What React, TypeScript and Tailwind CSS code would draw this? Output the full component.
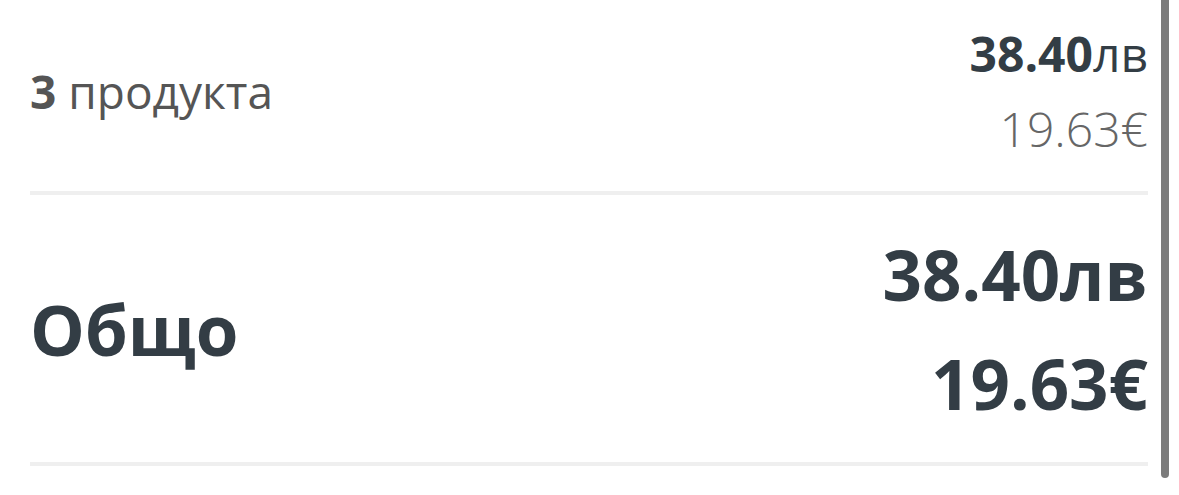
export default function App() {
  return (
    <main className="relative h-[495px] w-[1179px] overflow-hidden bg-white" style={{ fontFamily: '"Open Sans", "Noto Sans", sans-serif' }}>
      <div className="pl-[30px] pr-[31px]">
        {/* Products subtotal */}
        <div className="flex items-center justify-between pt-[16px] pb-[25px]">
          <div className="text-[46px] leading-[75px] text-[#555555]">
            <span className="font-bold">3</span> продукта
          </div>
          <div className="flex flex-col items-end text-[48px] leading-[75px]">
            <div className="text-[#333d45]">
              <span className="font-bold">38.40</span>лв
            </div>
            <div className="font-light text-[#666666]">19.63€</div>
          </div>
        </div>
        <div className="h-[4px] bg-[#efefef]" />

        {/* Total */}
        <div className="flex items-center justify-between pt-[25px] pb-[24px]">
          <div className="text-[69px] leading-[108px] font-bold text-[#333d45]">Общо</div>
          <div className="flex flex-col items-end text-[69px] leading-[109px] font-bold text-[#333d45]">
            <div>38.40лв</div>
            <div>19.63€</div>
          </div>
        </div>
        <div className="h-[4px] bg-[#efefef]" />
      </div>

      {/* scrollbar */}
      <div className="absolute left-[1161px] top-0 h-[478px] w-[8px] rounded-b-full bg-[#7b7b7b]" />
    </main>
  );
}
